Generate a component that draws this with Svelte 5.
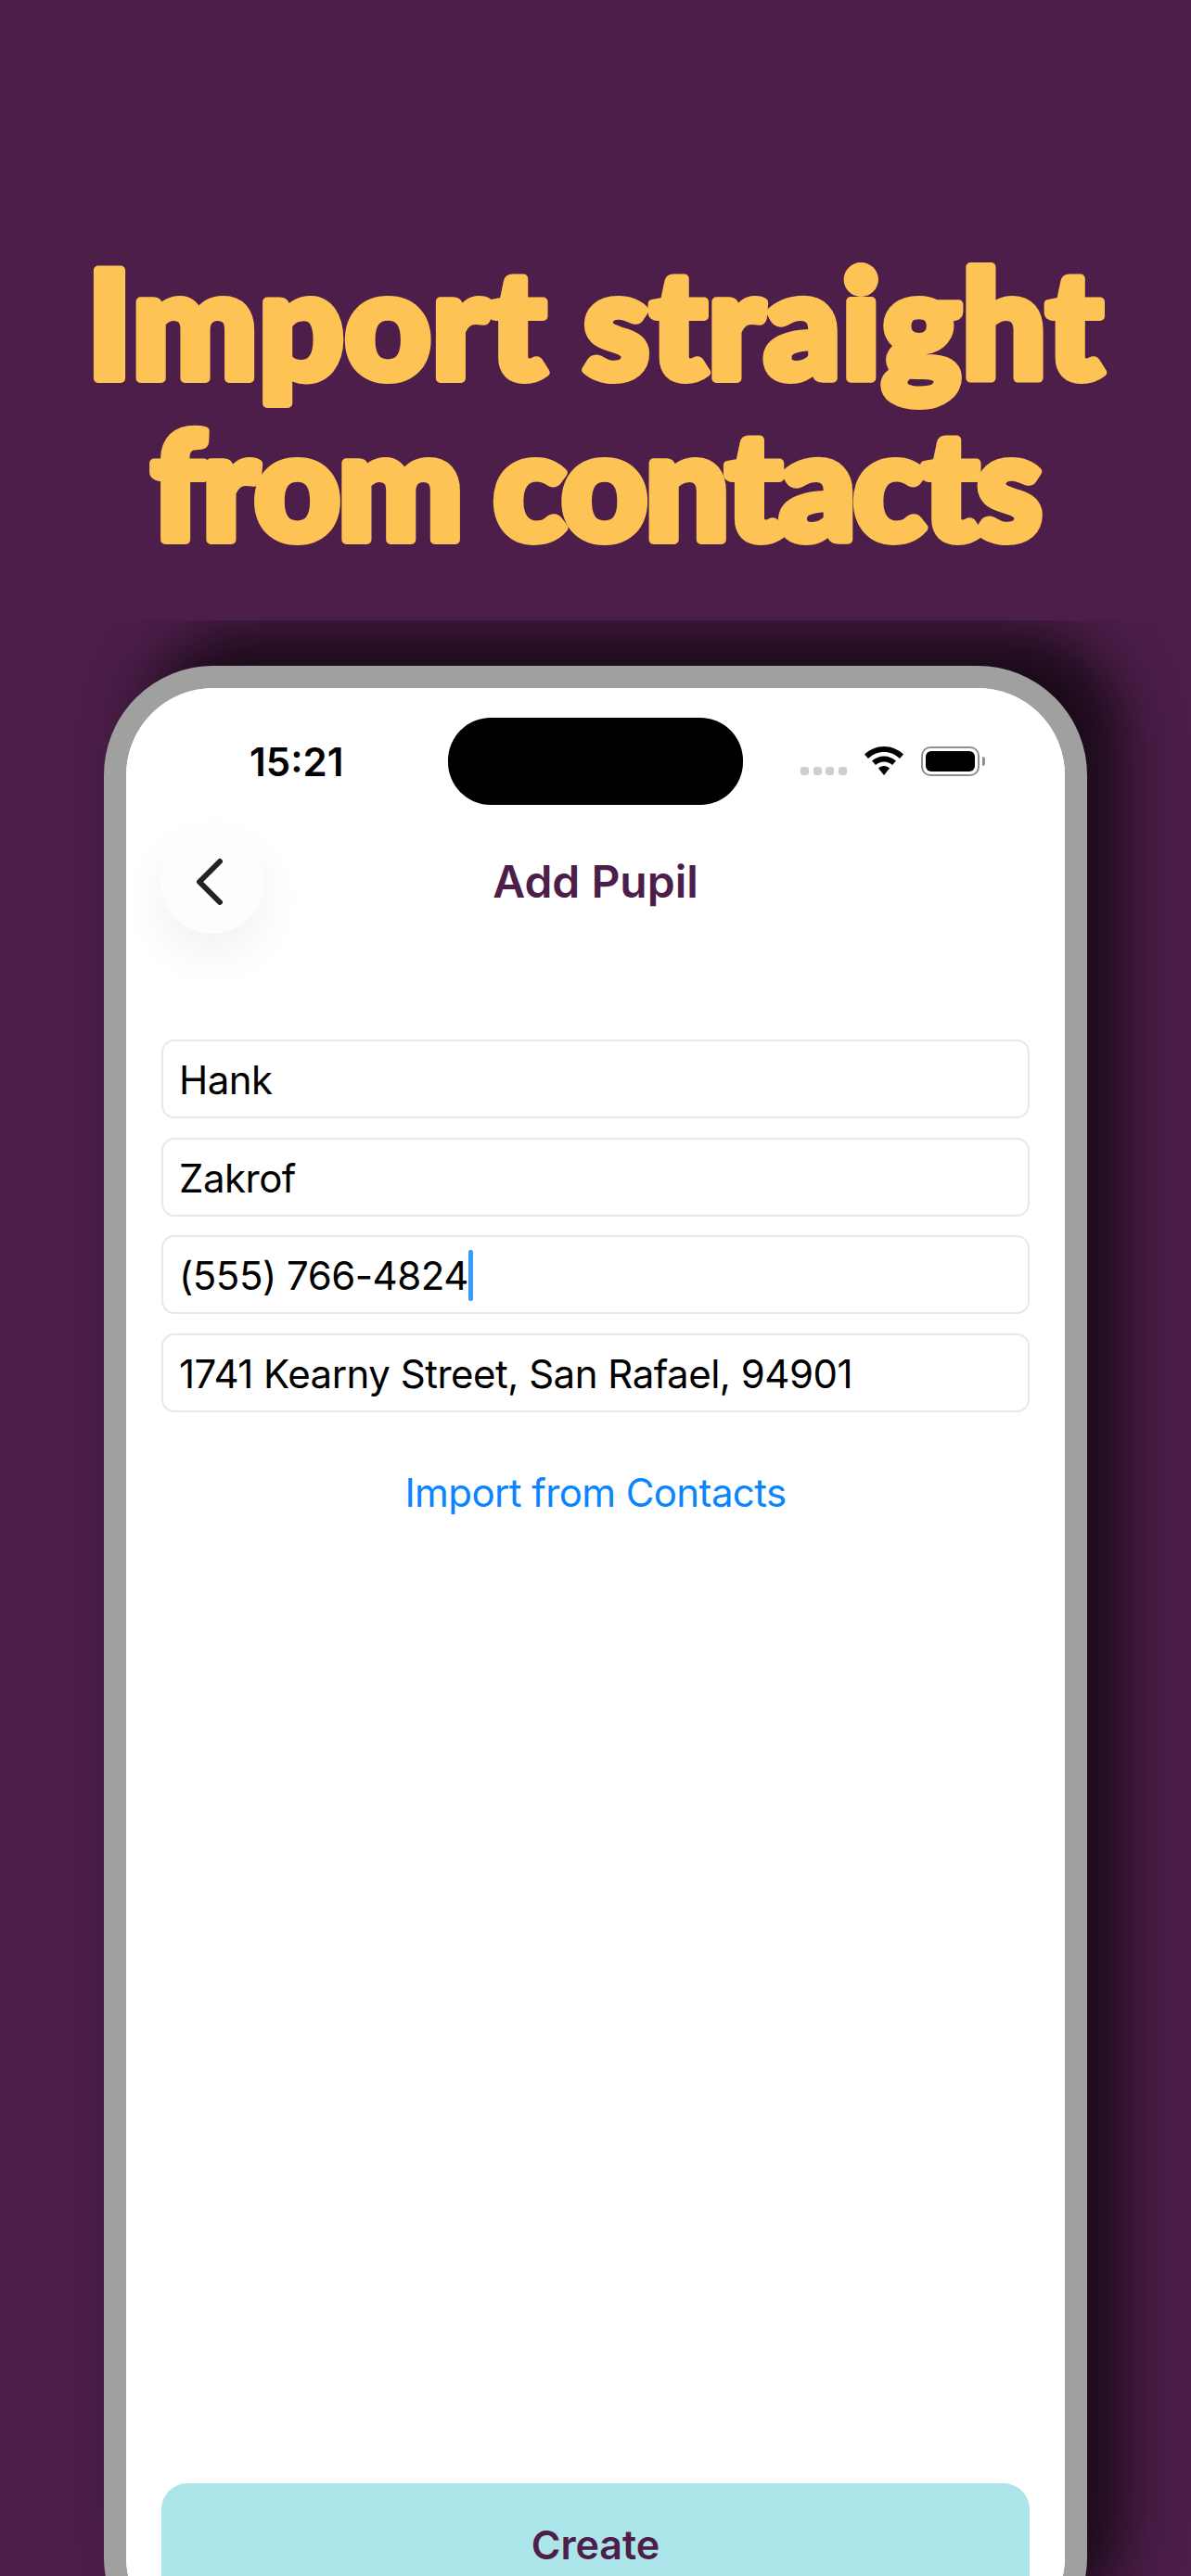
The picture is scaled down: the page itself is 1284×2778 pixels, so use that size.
<script lang="ts">
  const fields = ['Hank', 'Zakrof', '(555) 766-4824', '1741 Kearny Street, San Rafael, 94901'];
  const activeField = 2;
</script>

<div class="page">
  <h1 class="headline">
    <svg viewBox="0 0 1284 669" width="1284" height="669">
      <text class="line-one" x="642" y="408">Import straight</text>
      <text class="line-two" x="642" y="582">from contacts</text>
    </svg>
  </h1>

  <div class="phone">
    <div class="screen">
      <div class="status">
        <span class="time">15:21</span>
        <div class="island"></div>
        <div class="indicators">
          <div class="signal">
            <i></i><i></i><i></i><i></i>
          </div>
          <svg class="wifi" viewBox="0 0 42 31" width="42" height="31">
            <path d="M21 0C29 0 36 3 42 8.5L38 13C33 8.5 27.5 6 21 6C14.5 6 9 8.5 4 13L0 8.5C6 3 13 0 21 0Z" />
            <path d="M21 10.5C26 10.5 30.5 12.5 34 15.5L30 20C27.5 18 24.5 16.5 21 16.5C17.5 16.5 14.5 18 12 20L8 15.5C11.5 12.5 16 10.5 21 10.5Z" />
            <path d="M21 21C23.5 21 25.5 22 27 23.5L21 31L15 23.5C16.5 22 18.5 21 21 21Z" />
          </svg>
          <div class="battery">
            <div class="battery-body"><div class="battery-level"></div></div>
            <div class="battery-cap"></div>
          </div>
        </div>
      </div>

      <header class="topbar">
        <button class="back" aria-label="Back">
          <svg viewBox="0 0 34 52" width="34" height="52">
            <path d="M28 4L6 26L28 48" />
          </svg>
        </button>
        <h2 class="title">Add Pupil</h2>
      </header>

      <form class="form">
        {#each fields as value, i}
          <div class="field">
            <span>{value}</span>
            {#if i === activeField}
              <span class="caret"></span>
            {/if}
          </div>
        {/each}
      </form>

      <div class="import">Import from Contacts</div>

      <button class="create">Create</button>
    </div>
  </div>
</div>

<style>
  :global(body) {
    margin: 0;
    background: #4c1e49;
  }

  .page {
    height: 2778px;
    overflow: hidden;
    background: #4c1e49;
    font-family: Inter, 'Liberation Sans', sans-serif;
  }

  /* sits above the phone shadow, which is cut off at this block's lower edge */
  .headline {
    position: relative;
    z-index: 1;
    height: 669px;
    margin: 0;
    background: #4c1e49;
  }

  .headline svg {
    display: block;
  }

  .headline text {
    font-family: Lato, sans-serif;
    font-size: 160px;
    font-weight: 900;
    text-anchor: middle;
    fill: #fec355;
    stroke: #fec355;
    stroke-width: 10px;
    stroke-linejoin: round;
  }

  .headline .line-one {
    letter-spacing: 1.5px;
  }

  .headline .line-two {
    letter-spacing: -2.5px;
  }

  .phone {
    box-sizing: border-box;
    width: 1060px;
    margin: 49px auto 0;
    border: 24px solid #a0a0a0;
    border-radius: 118px;
    background: #fff;
    box-shadow: 40px -40px 60px rgba(0, 0, 0, 0.66);
  }

  .screen {
    height: 2110px;
    display: flex;
    flex-direction: column;
    border-radius: 94px;
    background: #fff;
  }

  .status {
    display: grid;
    grid-template-columns: 347px 318px 1fr;
    margin-top: 32px;
    height: 92px;
  }

  .time {
    padding: 2px 0 0 133px;
    font-size: 42px;
    font-weight: 600;
    line-height: 92px;
    color: #000;
  }

  .island {
    background: #000;
    border-radius: 46px;
  }

  .indicators {
    display: flex;
    align-items: flex-start;
    padding: 31px 0 0 62px;
  }

  .signal {
    display: flex;
    gap: 4.5px;
    margin-top: 22px;
  }

  .signal i {
    width: 9px;
    height: 9px;
    border-radius: 3px;
    background: #cfcfcf;
  }

  .wifi {
    margin-left: 19px;
    fill: #000;
  }

  .battery {
    display: flex;
    align-items: center;
    margin-left: 19px;
  }

  .battery-body {
    box-sizing: border-box;
    width: 63px;
    height: 32px;
    padding: 3px;
    border: 2px solid #8f8f8f;
    border-radius: 10px;
  }

  .battery-level {
    height: 100%;
    border-radius: 6px;
    background: #000;
  }

  .battery-cap {
    width: 3px;
    height: 10px;
    margin-left: 3px;
    border-radius: 0 3px 3px 0;
    background: #8f8f8f;
  }

  .topbar {
    display: grid;
    grid-template-columns: 112px 1fr 112px;
    align-items: center;
    margin-top: 29px;
    padding: 0 37px;
  }

  .back {
    display: flex;
    align-items: center;
    justify-content: center;
    width: 112px;
    height: 112px;
    padding: 0;
    border: none;
    border-radius: 50%;
    background: #fdfdfd;
    box-shadow: 0 20px 50px rgba(0, 0, 0, 0.06);
  }

  .back svg {
    fill: none;
    stroke: #222;
    stroke-width: 6;
    stroke-linecap: round;
    stroke-linejoin: round;
    margin-right: 6px;
  }

  .title {
    margin: 0;
    padding-bottom: 1px;
    font-size: 48px;
    font-weight: 600;
    text-align: center;
    color: #4c1e49;
  }

  .form {
    display: flex;
    flex-direction: column;
    gap: 20.5px;
    margin-top: 114px;
    padding: 0 38px;
  }

  .field {
    box-sizing: border-box;
    display: flex;
    align-items: center;
    height: 85px;
    padding: 2px 17px 0;
    border: 2px solid #e8e8e8;
    border-radius: 14px;
    font-size: 42px;
    letter-spacing: -0.5px;
    color: #000;
  }

  .caret {
    width: 5px;
    height: 55px;
    border-radius: 2px;
    background: #3a9bff;
  }

  .import {
    margin-top: 62px;
    font-size: 42px;
    letter-spacing: -0.6px;
    line-height: 50px;
    text-align: center;
    color: #0a84ff;
  }

  .create {
    height: 134px;
    margin: auto 38px 40px;
    padding: 0 0 3px;
    border: none;
    border-radius: 28px;
    background: #ace5e9;
    font-family: inherit;
    font-size: 43px;
    font-weight: 600;
    color: #4c1e49;
  }
</style>
